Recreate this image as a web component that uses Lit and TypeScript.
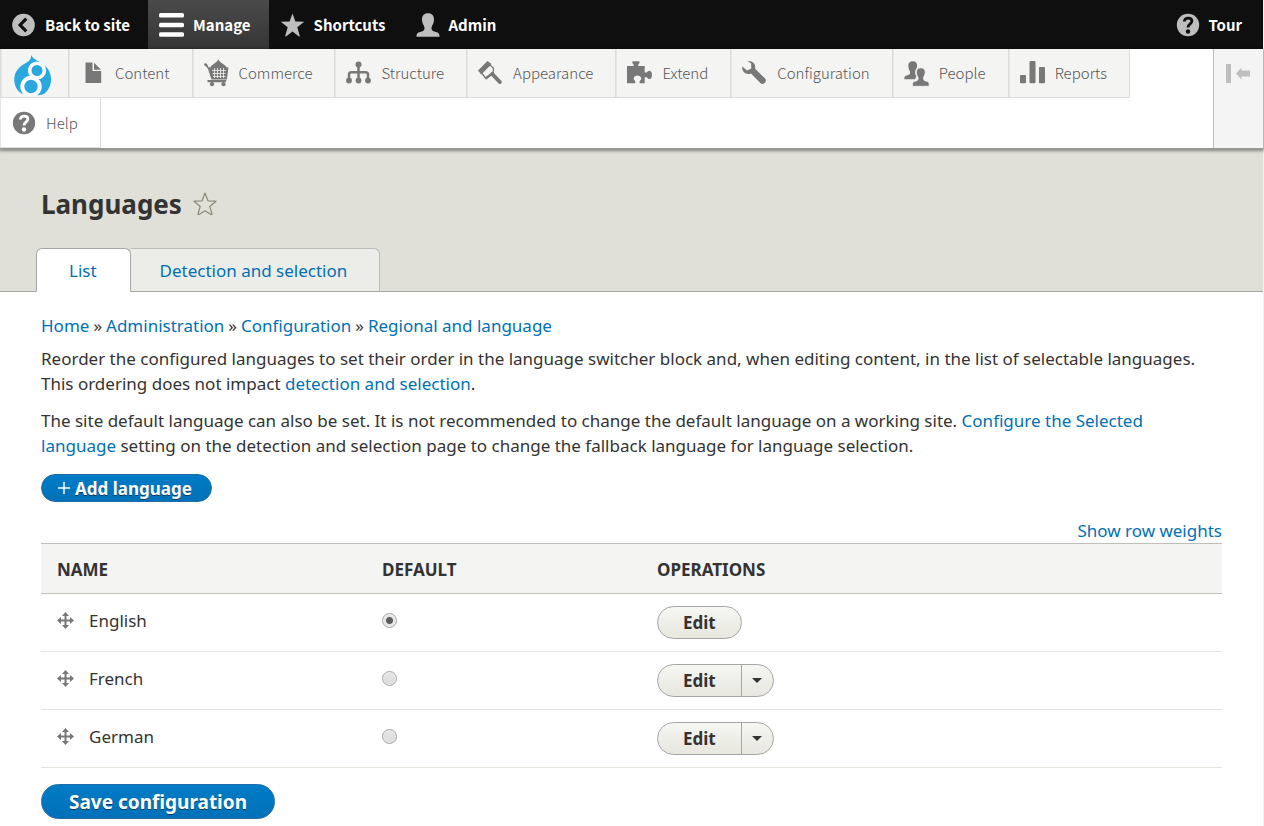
import { LitElement, html, css, svg } from "lit";
import { customElement, state } from "lit/decorators.js";

const question = (ink: string) => svg`<circle cx="13" cy="12" r="11.2"/><path d="M9.300 8.500c.2-2.300 1.700-3.400 3.900-3.400 2.300 0 3.700 1.200 3.700 3 0 2.800-3.900 2.800-3.900 6.400" fill="none" stroke=${ink} stroke-width="2.800"/><circle cx="13" cy="18.500" r="2.200" fill=${ink}/>`;

const icons: Record<string, unknown> = {
  back: svg`<circle cx="12.500" cy="12" r="11.3"/><path d="M15.300 5.700 9.100 12l6.200 6.300" fill="none" stroke="#0f0f0f" stroke-width="3.2"/>`,
  menu: svg`<rect width="25" height="4.6" rx="1.6" y="0"/><rect width="25" height="4.6" rx="1.6" y="9.7"/><rect width="25" height="4.6" rx="1.6" y="19.2"/>`,
  star: svg`<path d="M12.500.4l2.900 8.200 8.800.2-6.900 5.500 2.500 8.800q0 .6-.8.4l-6.500-4.900L6 23.500q-.8.2-.8-.4l2.500-8.800L.8 8.800l8.800-.2z"/>`,
  user: svg`<path d="M12 .2c4 0 6.200 2.400 6 6.800-.2 3.300-1.600 5-2.200 6.600-.6 1.900-.4 3.900 1.700 4.700l4 1.300c1.200.5 2 1.500 2 4.200H.5c0-2.700.8-3.700 2-4.200l4-1.300c2.100-.8 2.300-2.800 1.700-4.700C7.600 12 6.200 10.300 6 7 5.800 2.600 8 .2 12 .2z" transform="translate(1 0)"/>`,
  tour: question("#0f0f0f"),
  help: question("#fff"),
  content: svg`<path d="M5.500 1.500h7V10h8.700v12H5.500z"/><path d="M14 1.700 21 8.700h-7z"/>`,
  commerce: svg`<g transform="translate(0 -1.500)"><path d="M0 4.500q1.500-1.400 3 0l1.500 3.200h2C8 4.500 12 4 14.300 0 16.500 4 21 4.500 22.500 7.700l2 .3-1.600 12H7.500L4 9.500 2 6.700Q0 6.500 0 4.500z"/><path d="M8 11h14M8.500 14h13M9 17h12.500M10.500 8.500v10M13.500 8.500v10M16.500 8.500v10M19.500 8.500v10" stroke="#f4f4f3" stroke-width=".8"/><path d="M3.500 20.500h19l-1 2.300h-18z"/><circle cx="8" cy="24.600" r="2.200"/><circle cx="19.500" cy="24.600" r="2.200"/></g>`,
  structure: svg`<circle cx="12.500" cy="3.500" r="3"/><circle cx="3" cy="19.500" r="2.900"/><circle cx="12.500" cy="19.500" r="2.900"/><circle cx="22" cy="19.500" r="2.900"/><path d="M12.500 4v15M3 18.500v-4.700q0-2.500 2.500-2.500h14q2.500 0 2.500 2.500v4.700" fill="none" stroke="#787878" stroke-width="2.500"/>`,
  appearance: svg`<path d="M11.800 3.800 3.500 12l4.500 5.500 7.200-5.200.3-5z" fill="#f4f4f3" stroke="#787878" stroke-width="1.300"/><path d="M0 9.500 9.500 0l4 3L3.200 13.500z"/><path d="m7.500 17.500 8-6" stroke="#787878" stroke-width="2.200"/><path d="m14.300 13 7.500 8" stroke="#787878" stroke-width="4" stroke-linecap="round"/>`,
  extend: svg`<path d="M0 5h6.500V3.200Q5 2.300 5.200.9q.1-.7 1.200-.7h5q1.100 0 1.200.7.2 1.400-1.300 2.300V5h6.400v6.500h2Q21 9.600 23 9.900c2.700.4 2.700 7.500 0 8-2 .3-3.300-1.600-3.300-1.600h-2v5.900h-5V20q1.800-1 1.500-3c-.5-3.500-7-3.500-7.500 0q-.3 2 1.500 3v2.200H0z"/>`,
  config: svg`<path d="M.3 5.400 5 9.600l4.300-2-.2-5.300L5.600.5c5-1.200 8.400 2.500 7.500 7.300l10 9.800c2.600 2.800-1.600 7.200-4.500 4.600L9 12.400C4.500 14.300-.8 10.900.3 5.400z"/>`,
  people: svg`<path d="M8.800.3c3 0 4.400 1.700 4.300 4.600-.1 1.700-.7 2.500-1 3.200-1.500 2-1.200 5 .2 7.200l-1.300 3H.3c0-2.400.4-3.200 1.500-3.600l2.900-.9c1.500-.7 1.600-2.200 1.100-3.600C5.300 9 4.400 7.800 4.300 5 4.200 1.900 5.800.3 8.800.3z"/><path d="M16.800 6.800c3 0 4.500 1.700 4.400 4.700-.1 2.400-1.100 3.600-1.500 4.700-.4 1.400-.3 2.900 1.200 3.500l2.800.9c1.100.4 1.500 1.200 1.500 4.700H8.400c0-3.500.4-4.300 1.500-4.700l2.800-.9c1.500-.6 1.600-2.100 1.200-3.500-.4-1.100-1.400-2.300-1.500-4.700-.1-3 1.400-4.700 4.400-4.700z" stroke="#f4f4f3" stroke-width=".8"/>`,
  reports: svg`<rect y="14" width="6" height="8.200" rx="1"/><rect x="9.500" width="6" height="22.200" rx="1"/><rect x="19" y="6" width="6" height="16.200" rx="1"/>`,
};

const icon = (name: string, cls = "") =>
  html`<svg class="icon ${cls}" viewBox="0 0 25 24" aria-hidden="true">${icons[name]}</svg>`;

const trayItems = [
  ["content", "Content"],
  ["commerce", "Commerce"],
  ["structure", "Structure"],
  ["appearance", "Appearance"],
  ["extend", "Extend"],
  ["config", "Configuration"],
  ["people", "People"],
  ["reports", "Reports"],
];

@customElement("app-root")
export class AppRoot extends LitElement {
  @state() private selected = "English";

  static styles = css`
    :host {
      display: block;
      box-sizing: border-box;
      min-height: 100vh;
      border-right: 1px solid #f2f2f2;
      background: #fff;
      color: #333;
      font: 17px/25px "Noto Sans", "Open Sans", sans-serif;
    }
    * { box-sizing: border-box; }
    a { color: #0071b3; text-decoration: none; }
    .bar, .tray, .bar button {
      font-family: "Noto Sans CJK SC", "Noto Sans", sans-serif;
    }
    .bar {
      display: flex;
      height: 49px;
      background: #0f0f0f;
      color: #fff;
    }
    .bar a, .bar button {
      display: flex;
      align-items: center;
      gap: 9px;
      padding: 0 18px 0 11px;
      border: 0;
      background: none;
      color: #fff;
      font-size: 15px;
      line-height: 24px;
      font-weight: 700;
    }
    .bar .active { background: linear-gradient(#4a4a4a, #353535); }
    .bar .tour { margin-left: auto; padding-right: 21px; gap: 8px; }
    .icon {
      flex: none;
      width: 25px;
      height: 24px;
      fill: #bebebe;
      overflow: visible;
    }
    .icon.white { fill: #fff; }
    .icon.grey { fill: #787878; }
    .tray {
      display: flex;
      height: 100px;
      border-bottom: 1px solid #999;
      box-shadow: 0 1px 3px 1px rgba(0, 0, 0, 0.4);
      position: relative;
    }
    .menu {
      display: flex;
      flex: 1;
      flex-wrap: wrap;
      align-content: flex-start;
      margin: 0;
      padding: 0;
      list-style: none;
    }
    .menu li {
      height: 49px;
      border-right: 1px solid #ddd;
      border-bottom: 1px solid #ddd;
      background: #f4f4f3;
      box-shadow: inset 1px 0 #e6e6e6;
    }
    .menu .home { width: 69px; padding: 6px 13px 1px; border-left: 1px solid #ddd; }
    .menu .help { height: 50px; background: #fff; }
    .menu .break { flex-basis: 100%; height: 0; border: 0; }
    .menu a {
      display: flex;
      align-items: center;
      gap: 10px;
      height: 100%;
      padding: 0 22px 0 11px;
      color: #565656;
      font-size: 15px;
      line-height: 24px;
      font-weight: 300;
    }
    .menu .home a { padding: 0; }
    .logo { width: 38px; height: 41px; flex: none; }
    .orient {
      display: flex;
      width: 50px;
      padding: 15px 12px;
      border: 0;
      border-left: 1px solid #bbb;
      background: #f4f4f4;
    }
    .orient svg { width: 25px; height: 20px; fill: #bebebe; }
    .header {
      padding: 38px 36px 0;
      border-bottom: 1px solid #a6a6a6;
      background: #e0e0d8;
    }
    .title { display: flex; align-items: center; gap: 11px; padding-left: 5px; }
    h1 { margin: 0; font-size: 26px; line-height: 34px; font-weight: 700; }
    .fav { width: 24px; height: 24px; padding: 0; border: 0; background: none; }
    .fav svg { display: block; width: 24px; height: 24px; fill: none; stroke: #8a8a7a; stroke-width: 1.2; }
    .tabs { display: flex; margin-top: 27px; margin-bottom: -1px; }
    .tab {
      height: 44px;
      padding: 9px 32px;
      border: 1px solid #bbb;
      border-left: 0;
      border-bottom-color: #a6a6a6;
      border-radius: 0 6px 0 0;
      background: #ecece8;
    }
    .tab.current {
      padding-right: 33px;
      border: 1px solid #a6a6a6;
      border-bottom-color: #fff;
      border-radius: 6px 6px 0 0;
      background: #fff;
      position: relative;
    }
    .tab + .tab { padding-left: 29px; }
    main { padding: 21px 41px 7px; }
    .crumbs { display: flex; gap: 4px; }
    p { margin: 0 0 12px; }
    .crumbs + p { margin-top: 8px; }
    .add {
      display: inline-flex;
      align-items: center;
      height: 28px;
      margin-top: 4px;
      padding: 0 19px 0 15px;
      border: 1px solid #1e6ca6;
      border-radius: 20px;
      background: linear-gradient(#007bc6, #0071b8);
      color: #fff;
      font-weight: 700;
      text-shadow: 0 1px rgba(0, 0, 0, 0.5);
    }
    .add svg { width: 14px; height: 14px; margin-right: 4px; stroke: #fff; stroke-width: 1.5; }
    .weights { display: flex; justify-content: flex-end; margin-top: 17px; }
    .weights button {
      padding: 0;
      border: 0;
      background: none;
      color: #0071b3;
      font: inherit;
      line-height: 24px;
    }
    table { width: 100%; border-collapse: collapse; table-layout: fixed; }
    th {
      height: 50px;
      padding: 1px 16px 0;
      border: solid #bfbfba;
      border-width: 1px 0;
      background: #f4f4f3;
      text-align: left;
      text-transform: uppercase;
      font-weight: 700;
      font-size: 17px;
    }
    th:nth-child(1) { width: 325px; }
    th:nth-child(2) { width: 275px; }
    td { height: 58px; padding: 0 16px 5px; border-bottom: 1px solid #e6e4df; }
    td:last-child { padding-bottom: 0; }
    .name { display: flex; align-items: center; gap: 15px; }
    .name svg { width: 17px; height: 17px; fill: #787878; stroke: #787878; }
    input {
      appearance: none;
      display: block;
      width: 15px;
      height: 15px;
      margin: 0;
      border: 1px solid #a6a6a6;
      border-radius: 50%;
      background: linear-gradient(#e4e4e4, #dcdcdc);
      box-shadow: inset 0 0 0 1px rgba(255, 255, 255, 0.4);
    }
    input:checked { background: radial-gradient(circle, #5c5c5c 3px, #e6e6e6 4px); }
    .ops {
      display: inline-flex;
      height: 33px;
      border: 1px solid #a6a6a6;
      border-radius: 17px;
      background: linear-gradient(#f6f6f3, #e7e7df);
      overflow: hidden;
      vertical-align: middle;
    }
    .ops button {
      display: flex;
      align-items: center;
      padding: 0 25px;
      border: 0;
      background: none;
      color: #333;
      font: inherit;
      font-weight: 700;
    }
    .ops .more { padding: 0 11px 0 10px; border-left: 1px solid #a6a6a6; }
    .more svg { width: 10px; height: 5px; fill: #333; }
    .save {
      height: 35px;
      margin-top: 16px;
      padding: 1px 27px 0;
      border: 1px solid #1e6ca6;
      border-radius: 20px;
      background: linear-gradient(#007bc6, #0071b8);
      color: #fff;
      font: inherit;
      font-size: 19px;
      font-weight: 700;
      text-shadow: 0 1px rgba(0, 0, 0, 0.5);
    }
  `;

  private row(name: string, more: boolean) {
    return html`<tr>
      <td>
        <div class="name">
          <svg viewBox="0 0 17 17" aria-hidden="true">
            <path d="M8.500 2v13M2 8.500h13" stroke-width="2" />
            <path stroke="none" d="M8.500 0 12 4H5zM8.500 17 5 13h7zM0 8.500 4 5v7zM17 8.500 13 12V5z" />
          </svg>
          <label for=${name}>${name}</label>
        </div>
      </td>
      <td>
        <input type="radio" name="default" id=${name} .checked=${this.selected === name}
          @change=${() => (this.selected = name)} />
      </td>
      <td>
        <div class="ops">
          <button>Edit</button>
          ${more
            ? html`<button class="more" aria-label="List additional actions">
                <svg viewBox="0 0 10 5"><path d="M0 0h10L5 5z" /></svg>
              </button>`
            : ""}
        </div>
      </td>
    </tr>`;
  }

  render() {
    return html`
      <nav class="bar">
        <a href="#">${icon("back")}Back to site</a>
        <button class="active">${icon("menu", "white")}Manage</button>
        <button>${icon("star")}Shortcuts</button>
        <button>${icon("user")}Admin</button>
        <button class="tour">${icon("tour")}Tour</button>
      </nav>
      <nav class="tray">
        <ul class="menu">
          <li class="home">
            <a href="#" aria-label="Home">
              <svg class="logo" viewBox="0 0 38 41">
                <path fill="#29a8e0" d="M17 0c1.500 3 6 5.500 9.800 7.700C33.500 11.600 37 17 37 24.500c0 6-2.700 10.800-6.500 14-2 1.200-4 1.700-6 1.700L7.500 38.500C3 35.500.3 30.800.3 24.500.3 17 5 11.500 11 8.500c3.500-1.900 6.500-4 6-8.500z" />
                <circle cx="23" cy="15.500" r="7.300" fill="none" stroke="#fff" stroke-width="3.600" />
                <circle cx="17" cy="31.500" r="8.700" fill="none" stroke="#fff" stroke-width="4" />
              </svg>
            </a>
          </li>
          ${trayItems.map(([key, label]) => html`<li><a href="#">${icon(key, "grey")}${label}</a></li>`)}
          <li class="break" role="presentation"></li>
          <li class="help"><a href="#">${icon("help", "grey")}Help</a></li>
        </ul>
        <button class="orient" aria-label="Vertical orientation">
          <svg viewBox="0 0 25 20"><path d="M0 0h5v19H0zM10 9.500 15.500 3.500v3H24v6h-8.500v3z" /></svg>
        </button>
      </nav>
      <header class="header">
        <div class="title">
          <h1>Languages</h1>
          <button class="fav" aria-label="Add to shortcuts">
            <svg viewBox="0 0 24 24"><path stroke-linejoin="round" d="M12 1l3 7.800 8 .4-6.200 5.300 2.200 7.500q-.2.800-1 .5l-6-3.700-6 3.700q-.8.300-1-.5l2.200-7.500L1 9.200l8-.4z" /></svg>
          </button>
        </div>
        <nav class="tabs">
          <a class="tab current" href="#">List</a>
          <a class="tab" href="#">Detection and selection</a>
        </nav>
      </header>
      <main>
        <nav class="crumbs">
          <a href="#">Home</a><span>»</span><a href="#">Administration</a><span>»</span>
          <a href="#">Configuration</a><span>»</span><a href="#">Regional and language</a>
        </nav>
        <p>
          Reorder the configured languages to set their order in the language switcher block and, when
          editing content, in the list of selectable languages. This ordering does not impact
          <a href="#">detection and selection</a>.
        </p>
        <p>
          The site default language can also be set. It is not recommended to change the default language
          on a working site. <a href="#">Configure the Selected language</a> setting on the detection and
          selection page to change the fallback language for language selection.
        </p>
        <a class="add" href="#">
          <svg viewBox="0 0 14 14" aria-hidden="true"><path d="M7 1v12M1 7h12" /></svg>Add language
        </a>
        <div class="weights"><button>Show row weights</button></div>
        <table>
          <thead>
            <tr><th>Name</th><th>Default</th><th>Operations</th></tr>
          </thead>
          <tbody>
            ${this.row("English", false)} ${this.row("French", true)} ${this.row("German", true)}
          </tbody>
        </table>
        <button class="save">Save configuration</button>
      </main>
    `;
  }
}
